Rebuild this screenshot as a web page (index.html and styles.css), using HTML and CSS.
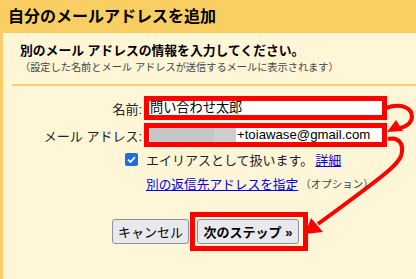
FILE: index.html
```html
<!DOCTYPE html>
<html lang="ja">
<head>
    <meta charset="UTF-8">
    <title>自分のメールアドレスを追加</title>
    <link rel="stylesheet" href="styles.css">
</head>
<body>
    <div class="header">自分のメールアドレスを追加</div>
    <div class="panel">
        <h2>別のメール アドレスの情報を入力してください。</h2>
        <p class="note">（設定した名前とメール アドレスが送信するメールに表示されます）</p>
        <div class="divider"></div>
        <div class="form">
            <label>名前:</label>
            <div class="mark">
                <div class="field">問い合わせ太郎</div>
            </div>
            <label>メール アドレス:</label>
            <div class="mark">
                <div class="field"><span class="blur1"></span><span class="blur2"></span>+toiawase@gmail.com</div>
            </div>
        </div>
        <div class="check-row">
            <span class="checkbox">
                <svg width="13" height="13" viewBox="0 0 13 13"><path d="M3 6.6 L5.4 9 L10 4.2" fill="none" stroke="#fff" stroke-width="1.8"/></svg>
            </span>
            <span>エイリアスとして扱います。</span>
            <a href="#">詳細</a>
        </div>
        <div class="link-row">
            <a href="#">別の返信先アドレスを指定</a>
            <span class="option">（オプション）</span>
        </div>
        <div class="buttons">
            <button class="btn">キャンセル</button>
            <div class="mark btn-mark">
                <button class="btn primary">次のステップ »</button>
            </div>
        </div>
    </div>
    <svg class="arrows" width="416" height="279" viewBox="0 0 416 279">
        <path d="M386 108 C 400 103, 412 107, 412 117 C 411 125, 403 128, 395 129" fill="none" stroke="#f00" stroke-width="4"/>
        <polygon points="387,132 396,120 403,131" fill="#f00"/>
        <path d="M388 139 C 398 137, 405 143, 401 156 C 398 164, 392 170, 318 224" fill="none" stroke="#f00" stroke-width="4"/>
        <polygon points="305,234 311,218 323,232" fill="#f00"/>
    </svg>
</body>
</html>
```

FILE: styles.css
```css
body {
    margin: 0;
    width: 416px;
    height: 279px;
    overflow: hidden;
    position: relative;
    background-color: #fff5d7;
    font-family: "Liberation Sans", "Noto Sans CJK JP", sans-serif;
    color: #111;
}
.header {
    height: 33px;
    line-height: 33px;
    padding-left: 8px;
    background-color: #f9cf63;
    font-size: 16px;
    font-weight: bold;
    color: #000;
}
.panel {
    border-left: 3px solid #f9cf63;
    padding-top: 10px;
    height: 236px;
}
h2 {
    margin: 0 0 0 17px;
    font-size: 12.8px;
    line-height: 16px;
    font-weight: bold;
    color: #000;
}
.note {
    margin: 2px 0 0 17px;
    font-size: 10.2px;
    line-height: 14px;
    color: #444;
}
.divider {
    margin: 9px 0 0 9px;
    height: 2px;
    background-color: #f9cf63;
}
.form {
    display: grid;
    grid-template-columns: 139px 243px;
    column-gap: 2px;
    row-gap: 3px;
    margin-top: 10px;
    align-items: center;
}
.form label {
    text-align: right;
    font-size: 13px;
    color: #222;
}
.mark {
    border: 5px solid #f00;
    box-sizing: border-box;
}
.field {
    height: 14px;
    line-height: 14px;
    background: #fff;
    font-size: 13.2px;
    padding-left: 1px;
    display: flex;
    align-items: center;
    color: #000;
    white-space: nowrap;
    overflow: hidden;
}
.blur1 {
    display: inline-block;
    width: 64px;
    height: 14px;
    background: #c6c6c6;
}
.blur2 {
    display: inline-block;
    width: 22px;
    height: 14px;
    background: #cecece;
    margin-right: 1px;
}
.check-row {
    display: flex;
    align-items: center;
    margin-top: 3px;
    padding-left: 122px;
    height: 18px;
    font-size: 13px;
    color: #222;
}
.checkbox {
    width: 13px;
    height: 13px;
    border-radius: 2px;
    background-color: #1a6fdc;
    margin-right: 8px;
    display: flex;
}
.check-row a {
    margin-left: 2px;
}
a {
    color: #0000ee;
}
.link-row {
    margin-top: 6px;
    padding-left: 143px;
    height: 18px;
    display: flex;
    align-items: center;
    font-size: 12.7px;
}
.option {
    font-size: 10.5px;
    color: #444;
    margin-left: 2px;
}
.buttons {
    display: flex;
    align-items: center;
    margin-top: 20px;
    padding-left: 109px;
    gap: 1px;
}
.btn {
    height: 25px;
    padding: 0 5px;
    border: 1px solid #8f8f9d;
    border-radius: 3px;
    background-color: #e9e9ed;
    font-family: "Liberation Sans", "Noto Sans CJK JP", sans-serif;
    font-size: 13px;
    color: #000;
}
.btn-mark {
    padding: 2px 4px 2px 2px;
}
.primary {
    font-weight: bold;
    width: 102px;
}
.arrows {
    position: absolute;
    left: 0;
    top: 0;
}
```
